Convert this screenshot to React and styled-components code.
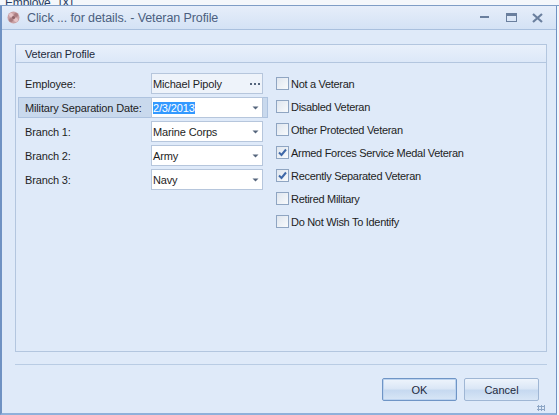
import React from 'react';
import styled, { createGlobalStyle } from 'styled-components';

const Global = createGlobalStyle`
  html, body {
    margin: 0;
    padding: 0;
    background: #ffffff;
    overflow: hidden;
  }
  * { box-sizing: border-box; }
`;

const Page = styled.div`
  width: 559px;
  height: 415px;
  display: flex;
  flex-direction: column;
  font-family: "Liberation Sans", Arial, sans-serif;
  font-size: 11px;
  letter-spacing: -0.15px;
  color: #1e1e1e;
  background: #f4f7fb;
`;

const BackStrip = styled.div`
  height: 6px;
  overflow: hidden;
  display: flex;
  gap: 8px;
  padding-left: 5px;
  color: #2b3f63;
  font-size: 12px;
  line-height: 6px;
  border-bottom: 1px solid #7f9dc6;
`;

const Window = styled.div`
  flex: 1;
  display: flex;
  flex-direction: column;
  margin-right: 2px;
  border-left: 2px solid #6f92c3;
  border-right: 1px solid #6f92c3;
  border-bottom: 2px solid #8fb0da;
  background: #dfeaf9;
`;

const TitleBar = styled.div`
  height: 24px;
  display: flex;
  align-items: center;
  padding: 0 6px 0 4px;
  background: linear-gradient(#e6eefa, #d4e2f5);
  border-bottom: 1px solid #a9c0de;
`;

const Title = styled.span`
  flex: 1;
  margin-left: 6px;
  font-size: 12.5px;
  letter-spacing: -0.1px;
  color: #4b5f80;
`;

const WinButton = styled.div`
  width: 26px;
  height: 20px;
  display: flex;
  align-items: center;
  justify-content: center;
`;

const Body = styled.div`
  flex: 1;
  display: flex;
  flex-direction: column;
  padding: 14px 9px 0 13px;
`;

const GroupBox = styled.div`
  height: 308px;
  border: 1px solid #b3c6df;
  display: flex;
  flex-direction: column;
`;

const GroupHeader = styled.div`
  height: 18px;
  padding-left: 9px;
  display: flex;
  align-items: center;
  color: #1e2a3c;
  background: linear-gradient(#e9f0fb, #dce8f8);
  border-bottom: 1px solid #b3c6df;
`;

const Columns = styled.div`
  display: flex;
  padding: 10px 0 0 2px;
  gap: 8px;
`;

const Fields = styled.div`
  width: 250px;
  display: flex;
  flex-direction: column;
  gap: 3px;
`;

const FieldRow = styled.div`
  height: 21px;
  display: flex;
  align-items: center;
  padding-left: 6px;
  border: 1px solid ${p => (p.$focused ? '#aec3df' : 'transparent')};
  background: ${p => (p.$focused ? '#c9d9ed' : 'transparent')};
`;

const Label = styled.span`
  width: 126px;
`;

const Input = styled.div`
  width: 112px;
  height: 21px;
  display: flex;
  align-items: center;
  padding-left: 1px;
  background: ${p => (p.$readonly ? '#eef3fa' : '#ffffff')};
  border: 1px solid #b6c6dc;
`;

const Value = styled.span`
  flex: 1;
  ${p => p.$selected && `
    flex: 0 0 auto;
    margin-right: auto;
    background: #3399ff;
    color: #ffffff;
  `}
`;

const Arrow = styled.span`
  width: 14px;
  display: flex;
  justify-content: center;
  align-items: center;
`;

const Checks = styled.div`
  display: flex;
  flex-direction: column;
  gap: 10px;
  padding-top: 4px;
  letter-spacing: -0.3px;
`;

const CheckRow = styled.label`
  display: flex;
  align-items: center;
  gap: 2px;
  height: 13px;
`;

const Box = styled.span`
  width: 13px;
  height: 13px;
  border: 1px solid #8fa5c2;
  background: linear-gradient(135deg, #dfe6ef, #f8fafc);
  display: flex;
  align-items: center;
  justify-content: center;
`;

const Footer = styled.div`
  margin-top: 12px;
  border-top: 1px solid #b9cce4;
  display: flex;
  justify-content: flex-end;
  gap: 7px;
  padding: 13px 8px 0 0;
`;

const Button = styled.button`
  width: 75px;
  height: 23px;
  font-family: inherit;
  font-size: 11px;
  color: #1e2a3c;
  border: 1px solid ${p => (p.$default ? '#6f95c6' : '#9fb6d4')};
  border-radius: 2px;
  background: linear-gradient(#eef4fc 0%, #dbe7f6 45%, #c6d9f0 55%, #d8e6f6 100%);
  box-shadow: ${p => (p.$default ? 'inset 0 0 0 1px #bcd3ef' : 'none')};
`;

const Grip = styled.div`
  align-self: flex-end;
  margin: 4px 2px 2px 0;
  width: 8px;
  height: 6px;
  background-image: radial-gradient(#8da6c6 1px, transparent 1.2px);
  background-size: 3px 3px;
`;

const DownArrow = () => (
  <svg width="7" height="4" viewBox="0 0 7 4">
    <path d="M0.5 0.5h6L3.5 3.5z" fill="#55657c" />
  </svg>
);

const Dots = () => (
  <svg width="11" height="3" viewBox="0 0 11 3">
    <rect x="0" y="1" width="2" height="2" fill="#55657c" />
    <rect x="4" y="1" width="2" height="2" fill="#55657c" />
    <rect x="8" y="1" width="2" height="2" fill="#55657c" />
  </svg>
);

const Tick = () => (
  <svg width="9" height="9" viewBox="0 0 9 9">
    <path d="M1 4.5l2.5 2.5L8 1.5" stroke="#3f68a8" strokeWidth="2" fill="none" />
  </svg>
);

const AppIcon = () => (
  <svg width="15" height="15" viewBox="0 0 15 15">
    <circle cx="7.5" cy="7.5" r="6" fill="#c9a0a4" />
    <circle cx="5" cy="5" r="2" fill="#e7c5c8" />
    <circle cx="10" cy="5" r="2" fill="#a97b80" />
    <circle cx="5" cy="10" r="2" fill="#a97b80" />
    <circle cx="10" cy="10" r="2" fill="#e7c5c8" />
    <circle cx="7.5" cy="7.5" r="1.6" fill="#8e6368" />
  </svg>
);

const fields = [
  { label: 'Employee:', value: 'Michael Pipoly', kind: 'dots' },
  { label: 'Military Separation Date:', value: '2/3/2013', kind: 'drop', focused: true },
  { label: 'Branch 1:', value: 'Marine Corps', kind: 'drop' },
  { label: 'Branch 2:', value: 'Army', kind: 'drop' },
  { label: 'Branch 3:', value: 'Navy', kind: 'drop' },
];

const checks = [
  { text: 'Not a Veteran' },
  { text: 'Disabled Veteran' },
  { text: 'Other Protected Veteran' },
  { text: 'Armed Forces Service Medal Veteran', on: true },
  { text: 'Recently Separated Veteran', on: true },
  { text: 'Retired Military' },
  { text: 'Do Not Wish To Identify' },
];

export default function App() {
  return (
    <Page>
      <Global />
      <BackStrip>
        <span>Employe</span>
        <span>[X]</span>
      </BackStrip>
      <Window>
        <TitleBar>
          <AppIcon />
          <Title>Click ... for details. - Veteran Profile</Title>
          <WinButton>
            <svg width="10" height="3"><rect width="9" height="2" fill="#6a7f9e" /></svg>
          </WinButton>
          <WinButton>
            <svg width="11" height="9"><rect x="0.5" y="0.5" width="10" height="8" fill="none" stroke="#6a7f9e" /><rect x="0" y="0" width="11" height="3" fill="#6a7f9e" /></svg>
          </WinButton>
          <WinButton>
            <svg width="11" height="10" viewBox="0 0 11 10"><path d="M1 1l9 8M10 1l-9 8" stroke="#6a7f9e" strokeWidth="2.2" /></svg>
          </WinButton>
        </TitleBar>
        <Body>
          <GroupBox>
            <GroupHeader>Veteran Profile</GroupHeader>
            <Columns>
              <Fields>
                {fields.map(f => (
                  <FieldRow key={f.label} $focused={f.focused}>
                    <Label>{f.label}</Label>
                    <Input $readonly={f.kind === 'dots'}>
                      <Value $selected={f.focused}>{f.value}</Value>
                      <Arrow>{f.kind === 'dots' ? <Dots /> : <DownArrow />}</Arrow>
                    </Input>
                  </FieldRow>
                ))}
              </Fields>
              <Checks>
                {checks.map(c => (
                  <CheckRow key={c.text}>
                    <Box>{c.on && <Tick />}</Box>
                    {c.text}
                  </CheckRow>
                ))}
              </Checks>
            </Columns>
          </GroupBox>
          <Footer>
            <Button $default>OK</Button>
            <Button>Cancel</Button>
          </Footer>
          <Grip />
        </Body>
      </Window>
    </Page>
  );
}
